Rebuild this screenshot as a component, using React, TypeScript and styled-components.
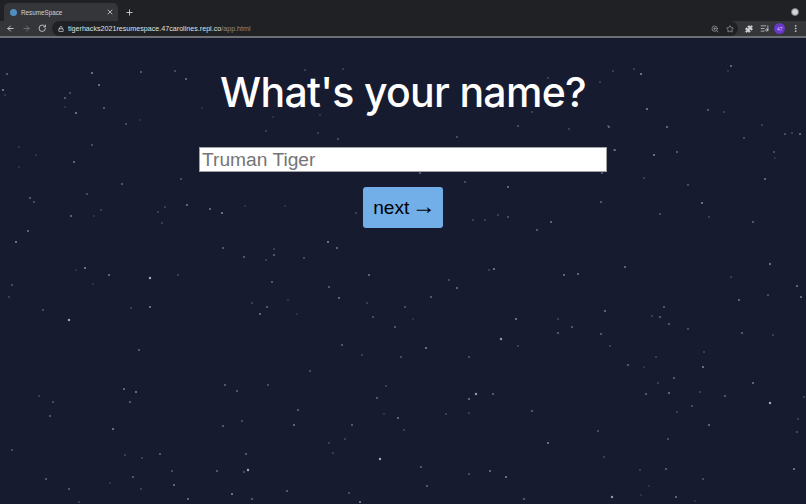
import React from "react";
import styled, { createGlobalStyle } from "styled-components";
import { ArrowLeft, ArrowRight, RotateCw, Lock, Plus, X, ZoomIn, Star, Puzzle, ListMusic, EllipsisVertical } from "lucide-react";

const GlobalStyle = createGlobalStyle`
  html, body {
    margin: 0;
    height: 100%;
    background: #171b30;
    overflow: hidden;
  }
`;

// x, y, opacity read off the reference
const STARS: [number, number, number][] = [
  [7,74,.5],[92,73,.7],[141,72,.5],[175,71,.4],[186,79,.6],[3,90,.7],[99,85,.7],[70,93,.4],[65,98,.5],[104,108,.5],[76,113,.7],[126,124,.4],[92,145,.4],[74,162,.6],[122,184,.5],[181,179,.4],[65,107,.2],[140,120,.2],[19,147,.2],[36,155,.2],[19,167,.2],[5,95,.2],
  [30,198,.5],[34,202,.4],[87,194,.4],[71,216,.6],[101,210,.3],[94,216,.2],[28,231,.6],[16,242,.7],[165,207,.3],[158,212,.3],[162,223,.3],[187,205,.6],[210,209,.6],[222,213,.7],[223,248,.5],[244,257,.5],[266,260,.3],[85,268,.7],[76,270,.2],[109,275,.6],[150,278,.9],[178,275,.3],[12,285,.4],[9,297,.3],[93,284,.2],[43,310,.4],[131,308,.3],[150,307,.7],[69,320,.9],[252,303,.3],[267,307,.5],[260,314,.6],
  [328,242,.7],[337,248,.6],[274,255,.5],[274,249,.3],[304,258,.4],[272,282,.5],[329,287,.5],[369,275,.6],[339,298,.6],[367,303,.3],[405,307,.4],[373,317,.4],[395,327,.5],[413,319,.2],[431,297,.5],[449,280,.4],[457,288,.6],[494,269,.7],[489,270,.3],[516,319,.7],[501,339,.8],[518,346,.3],[426,348,.7],[469,357,.4],[401,357,.4],[342,345,.5],[362,355,.3],[288,300,.2],[297,314,.2],
  [731,66,.6],[641,74,.7],[613,71,.3],[634,69,.3],[728,71,.2],[600,82,.3],[647,109,.7],[708,110,.5],[724,112,.3],[609,127,.5],[667,127,.6],[569,129,.3],[762,125,.3],[800,134,.6],[785,134,.4],[792,133,.3],[744,138,.4],[615,150,.5],[654,155,.7],[677,152,.5],[774,152,.4],[775,158,.2],[644,178,.3],[688,185,.4],[765,179,.6],[602,173,.5],
  [702,203,.7],[601,202,.5],[660,214,.4],[753,222,.5],[709,217,.3],[551,222,.6],[625,267,.6],[578,274,.6],[564,275,.6],[770,264,.7],[731,277,.3],[797,286,.6],[801,297,.6],[739,300,.6],[768,295,.4],[605,311,.6],[664,307,.5],[660,317,.5],[652,316,.3],[669,324,.5],[558,319,.3],[572,327,.5],[558,333,.5],[601,334,.5],[688,329,.4],[742,333,.5],[773,335,.3],[610,346,.3],
  [139,350,.5],[124,389,.6],[136,392,.7],[130,402,.5],[53,402,.4],[39,396,.3],[50,416,.5],[113,429,.7],[225,385,.5],[237,391,.5],[268,385,.4],[242,421,.4],[223,426,.5],[12,450,.4],[125,455,.3],[142,458,.3],[160,454,.5],[246,454,.5],[172,471,.4],[217,471,.5],[248,470,.9],[244,472,.4],[133,477,.5],[46,479,.5],[174,485,.6],[232,494,.7],[69,489,.5],[141,489,.3],[110,483,.2],[188,499,.6],[252,499,.5],[79,502,.3],
  [310,371,.4],[386,386,.3],[377,398,.5],[476,394,.8],[469,399,.6],[493,394,.5],[298,410,.5],[294,425,.6],[398,418,.6],[384,414,.2],[446,414,.3],[469,413,.3],[532,411,.5],[352,425,.5],[404,430,.3],[329,443,.3],[345,439,.3],[333,453,.3],[380,459,.9],[421,467,.5],[490,471,.6],[506,477,.7],[469,474,.4],[427,486,.5],[287,491,.5],[349,493,.4],[360,502,.7],[524,499,.5],
  [703,367,.7],[628,365,.5],[656,357,.3],[704,352,.3],[644,367,.2],[674,378,.5],[658,383,.3],[753,383,.6],[646,394,.5],[669,393,.6],[700,392,.3],[725,396,.5],[770,403,.9],[804,397,.3],[692,406,.4],[677,412,.3],[709,425,.6],[798,419,.3],[797,432,.4],[598,431,.4],[668,439,.4],[548,443,.7],[604,457,.3],[640,470,.3],[666,469,.5],[794,469,.7],[703,479,.4],[649,486,.2],[612,497,.8],[676,497,.6],[695,501,.2],[641,495,.2],
  [266,131,.3],[338,139,.4],[318,133,.3],[457,137,.4],[518,126,.4],[608,126,.3],[614,150,.3],[420,173,.5],[465,182,.4],[508,187,.6],[537,230,.5],[508,217,.4],[498,215,.3],[485,220,.3],[473,220,.3],[356,213,.3],[305,70,.3],[343,69,.3],[202,108,.2],[532,112,.3],[548,78,.3],[273,117,.2],[320,115,.2],[285,206,.2],[245,206,.2],
];

const Window = styled.div`
  position: relative;
  width: 806px;
  height: 504px;
  overflow: hidden;
  display: flex;
  flex-direction: column;
  background: #171b30;
`;

const TabStrip = styled.div`
  height: 21px;
  background: #202124;
  display: flex;
  align-items: flex-end;
  padding-left: 4px;
  flex-shrink: 0;
`;

const Tab = styled.div`
  width: 114px;
  height: 18px;
  box-sizing: border-box;
  padding: 0 4px 0 6px;
  background: #35363a;
  border-radius: 5px 5px 0 0;
  display: flex;
  align-items: center;
  gap: 4px;
  color: #d2d3d6;
  font: 6.3px "Liberation Sans", sans-serif;
`;

const Favicon = styled.span`
  width: 7px;
  height: 7px;
  border-radius: 50%;
  background: #4f8fc0;
`;

const TabTitle = styled.span`
  flex: 1;
`;

const NewTab = styled.div`
  color: #dcdde0;
  height: 18px;
  margin-left: 7px;
  display: flex;
  align-items: center;
`;

const ProfileDot = styled.span`
  margin-left: auto;
  margin-right: 7.5px;
  margin-bottom: 5px;
  width: 6px;
  height: 6px;
  border-radius: 50%;
  background: #d4d5d8;
  border: 0.5px solid #777;
`;

const Toolbar = styled.div`
  height: 15px;
  background: #35363a;
  display: flex;
  align-items: center;
  padding: 0 3px;
  color: #c9cacd;
  flex-shrink: 0;
`;

const ToolSlot = styled.span<{ $dim?: boolean }>`
  width: 15.5px;
  display: flex;
  align-items: center;
  justify-content: center;
  color: ${(p) => (p.$dim ? "#73757a" : "#d0d1d4")};
`;

const Omnibox = styled.div`
  flex: 1;
  height: 15px;
  margin-left: 2.5px;
  margin-right: 3.5px;
  box-sizing: border-box;
  padding: 0 4px 0 6px;
  background: #202124;
  border-radius: 8px;
  display: flex;
  align-items: center;
  gap: 4px;
  font: 7.15px "Liberation Sans", sans-serif;
  color: #dfe1e4;
`;

const Url = styled.span`
  flex: 1;
`;

const UrlPath = styled.span`
  color: #8b8d92;
`;

const OmniIcons = styled.span`
  display: flex;
  align-items: center;
  gap: 7px;
  color: #a9abaf;
`;

const Avatar = styled.span`
  width: 11px;
  height: 11px;
  border-radius: 50%;
  background: #6a37c8;
  color: #d8c8f2;
  font: 5px "Liberation Sans", sans-serif;
  display: flex;
  align-items: center;
  justify-content: center;
`;

const Divider = styled.div`
  height: 1.5px;
  background: #6d6e72;
  flex-shrink: 0;
`;

const Sky = styled.svg`
  position: absolute;
  inset: 0;
  pointer-events: none;
  filter: blur(0.5px);
`;

const Page = styled.main`
  position: relative;
  flex: 1;
  display: flex;
  flex-direction: column;
  align-items: center;
`;

const Title = styled.h1`
  margin: 26px 0 0;
  height: 56px;
  color: #fff;
  font: 550 41px/56px "Inter", sans-serif;
  letter-spacing: -0.7px;
  white-space: nowrap;
`;

const NameInput = styled.input`
  margin-top: 27.5px;
  width: 408px;
  height: 25px;
  box-sizing: border-box;
  padding: 0 2px;
  background: #fff;
  border: 1px solid #a0a0a4;
  border-radius: 0;
  font: 19.2px "Liberation Sans", sans-serif;
  color: #111;
  &::placeholder {
    color: #757575;
    opacity: 1;
  }
`;

const NextButton = styled.button`
  margin-top: 15px;
  width: 80px;
  height: 41px;
  padding: 0 0 2px 3px;
  background: #72aee8;
  border: none;
  border-radius: 3px;
  color: #000;
  font: 19.2px "Liberation Sans", sans-serif;
  word-spacing: -3px;
`;

const ArrowGlyph = styled.span`
  font-size: 24px;
  line-height: 1;
`;

export default function App() {
  return (
    <Window>
      <GlobalStyle />
      <Sky width={806} height={504} viewBox="0 0 806 504">
        {STARS.map(([x, y, o], i) => (
          <circle key={i} cx={x} cy={y} r={o > 0.75 ? 1.2 : 1} fill="#dfe3f2" opacity={o * 0.8} />
        ))}
      </Sky>
      <TabStrip>
        <Tab>
          <Favicon />
          <TabTitle>ResumeSpace</TabTitle>
          <X size={8} strokeWidth={2.4} />
        </Tab>
        <NewTab>
          <Plus size={9} strokeWidth={2.2} />
        </NewTab>
        <ProfileDot />
      </TabStrip>
      <Toolbar>
        <ToolSlot>
          <ArrowLeft size={9} strokeWidth={2.4} />
        </ToolSlot>
        <ToolSlot $dim>
          <ArrowRight size={9} strokeWidth={2.4} />
        </ToolSlot>
        <ToolSlot>
          <RotateCw size={8.5} strokeWidth={2.4} />
        </ToolSlot>
        <Omnibox>
          <Lock size={6} strokeWidth={2.6} />
          <Url>
            tigerhacks2021resumespace.47carolines.repl.co<UrlPath>/app.html</UrlPath>
          </Url>
          <OmniIcons>
            <ZoomIn size={8} strokeWidth={2} />
            <Star size={8} strokeWidth={2} />
          </OmniIcons>
        </Omnibox>
        <ToolSlot>
          <Puzzle size={8} fill="currentColor" strokeWidth={2} />
        </ToolSlot>
        <ToolSlot>
          <ListMusic size={9} strokeWidth={2} />
        </ToolSlot>
        <ToolSlot>
          <Avatar>47</Avatar>
        </ToolSlot>
        <ToolSlot>
          <EllipsisVertical size={9} strokeWidth={2.4} />
        </ToolSlot>
      </Toolbar>
      <Divider />
      <Page>
        <Title>What's your name?</Title>
        <NameInput placeholder="Truman Tiger" />
        <NextButton>
          next <ArrowGlyph>→</ArrowGlyph>
        </NextButton>
      </Page>
    </Window>
  );
}
